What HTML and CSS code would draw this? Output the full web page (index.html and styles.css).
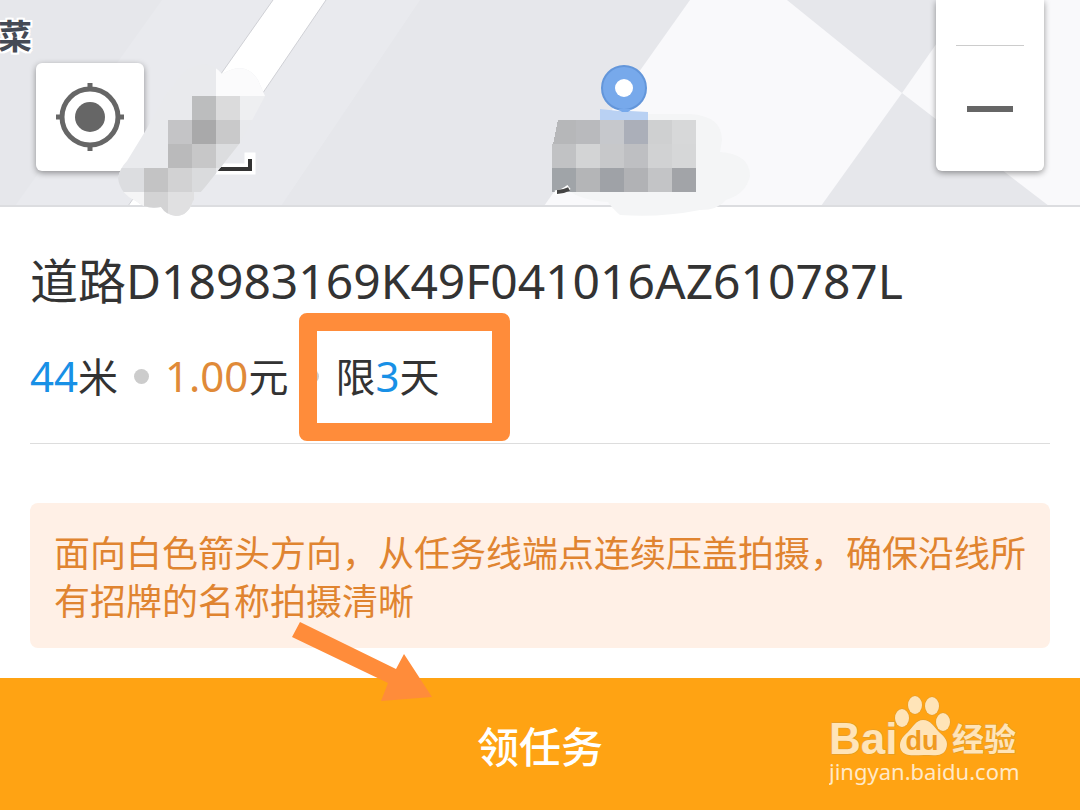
FILE: index.html
```html
<!DOCTYPE html>
<html lang="zh-CN">
<head>
    <meta charset="UTF-8">
    <meta name="viewport" content="width=device-width, initial-scale=1.0">
    <title>领任务</title>
    <link rel="stylesheet" href="styles.css">
</head>
<body>
    <section class="map">
        <svg class="map-base" viewBox="0 0 1080 206" preserveAspectRatio="xMidYMin slice" aria-hidden="true">
            <rect width="1080" height="206" fill="#e6e7eb"/>
            <path d="M162 0H420L281 206H15Z" fill="#e9eaee"/>
            <path d="M273 0H326L186 206H128Z" fill="#fff"/>
            <path d="M273 0L128 206M326 0L186 206" stroke="#cfd0d5" fill="none"/>
            <path d="M690 0H1080V206H544Z" fill="#f9f9fb"/>
            <path d="M787 0H967L902 93Z" fill="#e6e7eb"/>
            <path d="M902 93L821 206H1049Z" fill="#e6e7eb"/>
        </svg>
        <span class="map-label">菜</span>
        <button class="locate" type="button" aria-label="定位">
            <svg width="70" height="70" viewBox="0 0 70 70" fill="none" stroke="#666">
                <circle cx="35" cy="35" r="28" stroke-width="5"/>
                <circle cx="35" cy="35" r="15" fill="#666" stroke="none"/>
                <path d="M35 1V9M35 61V69M1 35H9M61 35H69" stroke-width="5"/>
            </svg>
        </button>
        <svg class="map-marks" viewBox="0 0 1080 206" preserveAspectRatio="xMidYMin slice" aria-hidden="true">
            <defs>
                <clipPath id="brush">
                    <path d="M182 74Q205 54 222 74Q246 60 258 80L265 96L240 143L206 186L193 201Q188 216 176 216Q166 215 161 207Q146 210 136 201Q120 194 118 178Q120 168 127 161L146 130L165 96Z"/>
                </clipPath>
            </defs>

            <!-- scale bar -->
            <path d="M212 169H250V158" fill="none" stroke="#fff" stroke-width="11" stroke-linecap="square"/>
            <path d="M212 169H250V159" fill="none" stroke="#333" stroke-width="4"/>

            <g clip-path="url(#brush)" shape-rendering="crispEdges">
                <rect x="112" y="48" width="160" height="170" fill="#e9eaed"/>
                <rect x="216" y="60" width="50" height="36" fill="#fbfbfc"/>
                <rect x="240" y="96" width="30" height="24" fill="#eeeff1"/>
                <rect x="192" y="96" width="24" height="24" fill="#bcbdbe"/>
                <rect x="216" y="96" width="24" height="24" fill="#dbdbdc"/>
                <rect x="168" y="120" width="24" height="24" fill="#c4c4c6"/>
                <rect x="192" y="120" width="24" height="24" fill="#a9a9aa"/>
                <rect x="216" y="120" width="24" height="24" fill="#c9c9ca"/>
                <rect x="168" y="144" width="24" height="24" fill="#bababb"/>
                <rect x="192" y="144" width="24" height="24" fill="#c7c7c8"/>
                <rect x="216" y="144" width="24" height="24" fill="#dcdddf"/>
                <rect x="112" y="168" width="32" height="24" fill="#dcdde0"/>
                <rect x="144" y="168" width="24" height="24" fill="#c3c3c4"/>
                <rect x="168" y="168" width="24" height="24" fill="#d2d2d3"/>
                <rect x="192" y="168" width="24" height="24" fill="#dadbdd"/>
                <rect x="112" y="192" width="32" height="24" fill="#f5f5f6"/>
                <rect x="144" y="192" width="24" height="24" fill="#d3d3d4"/>
                <rect x="168" y="192" width="26" height="26" fill="#e0e0e1"/>
            </g>

            <!-- place marker -->
            <path d="M648 114H690Q722 116 722 140L720 152Q750 154 750 176Q746 194 726 200Q718 210 700 210Q660 218 620 215Q612 208 608 202Q580 200 568 190L600 150Z" fill="#f4f5f6"/>
            <circle cx="624" cy="88" r="22" fill="#77a9eb" stroke="#6396da" stroke-width="2"/>
            <circle cx="624" cy="88" r="9" fill="#fff"/>
            <path d="M600 109L619 111H630L648 112V120H600Z" fill="#b9d1f3"/>
            <path d="M618 109L622 112H628L632 109Z" fill="#77a9eb"/>
            <g shape-rendering="crispEdges">
                <path d="M558 120H576V144H553L556 130Z" fill="#b6b7b9"/>
                <rect x="576" y="120" width="24" height="24" fill="#b9babd"/>
                <rect x="600" y="120" width="24" height="24" fill="#c6c8cc"/>
                <rect x="624" y="120" width="24" height="24" fill="#abafb9"/>
                <rect x="648" y="120" width="24" height="24" fill="#cfd0d1"/>
                <rect x="672" y="120" width="24" height="24" fill="#d7d8d9"/>
                <rect x="552" y="144" width="24" height="24" fill="#c1c2c4"/>
                <rect x="576" y="144" width="24" height="24" fill="#d3d4d5"/>
                <rect x="600" y="144" width="24" height="24" fill="#c7c8ca"/>
                <rect x="624" y="144" width="24" height="24" fill="#bebfc2"/>
                <rect x="648" y="144" width="24" height="24" fill="#d1d2d3"/>
                <rect x="672" y="144" width="24" height="24" fill="#d6d7d8"/>
                <rect x="552" y="168" width="24" height="24" fill="#a0a4a8"/>
                <rect x="576" y="168" width="24" height="24" fill="#b4b5b7"/>
                <rect x="600" y="168" width="24" height="24" fill="#9fa2a7"/>
                <rect x="624" y="168" width="24" height="24" fill="#b1b2b5"/>
                <rect x="648" y="168" width="24" height="24" fill="#c3c4c6"/>
                <rect x="672" y="168" width="24" height="24" fill="#a2a4a8"/>
            </g>
            <path d="M555 193Q563 192 569 187" fill="none" stroke="#fff" stroke-width="5"/>
            <path d="M557 192Q563 192 569 189" fill="none" stroke="#444" stroke-width="4"/>
        </svg>
        <div class="zoom">
            <button class="zoom-in" type="button" aria-label="放大"></button>
            <button class="zoom-out" type="button" aria-label="缩小">
                <svg width="46" height="6" viewBox="0 0 46 6"><rect width="46" height="6" fill="#666"/></svg>
            </button>
        </div>
    </section>

    <main class="task">
        <h1>道路D18983169K49F041016AZ610787L</h1>
        <div class="meta">
            <span><b class="blue">44</b>米</span>
            <i class="dot"></i>
            <span><b class="orange">1.00</b>元</span>
            <i class="dot"></i>
            <span class="limit">限<b class="blue">3</b>天</span>
        </div>
        <p class="notice">面向白色箭头方向，从任务线端点连续压盖拍摄，确保沿线所有招牌的名称拍摄清晰</p>
    </main>

    <footer class="bottom">
        <button class="accept" type="button">领任务</button>
        <svg class="arrow" width="140" height="82" viewBox="0 0 140 82" aria-hidden="true">
            <path d="M8 2L104 49L112 34L140 77L89 81L96 63L0 17Z" fill="#ff8c3a"/>
        </svg>
        <svg class="watermark" width="200" height="94" viewBox="0 0 200 94" role="img" aria-label="Baidu 经验">
            <g fill="#ffe4b8" stroke="#d99a35" stroke-width="1" paint-order="stroke">
                <text class="wm-bai" x="0" y="59">Bai</text>
                <ellipse cx="73" cy="23" rx="7" ry="9"/>
                <ellipse cx="86" cy="10" rx="7" ry="9"/>
                <ellipse cx="103" cy="11" rx="7" ry="9"/>
                <ellipse cx="114" cy="27" rx="7" ry="9"/>
                <path d="M94 25C102 25 105 32 110 37C116 42 120 47 117 54C114 62 105 60 95 60C84 60 76 62 72 55C69 48 73 42 79 37C84 32 87 25 94 25Z"/>
                <text class="wm-cn" x="123" y="56">经验</text>
            </g>
            <text class="wm-du" x="93" y="55" text-anchor="middle">du</text>
            <text class="wm-url" x="0" y="85">jingyan.baidu.com</text>
        </svg>
    </footer>
</body>
</html>
```
FILE: styles.css
```css
*, *::after {
    box-sizing: border-box;
}
body {
    margin: 0;
    min-height: 100vh;
    display: flex;
    flex-direction: column;
    background-color: #fff;
    color: #333;
    font-family: "Noto Sans", "Noto Sans CJK SC", sans-serif;
}
button {
    border: 0;
    padding: 0;
    background-color: #fff;
    cursor: pointer;
}

/* map */
.map {
    position: relative;
    height: 207px;
    border-bottom: 2px solid #dcdde0;
}
.map-base, .map-marks {
    position: absolute;
    top: 0;
    left: 0;
    width: 100%;
    height: 100%;
}
.map-marks {
    overflow: visible;
    pointer-events: none;
}
.map-label {
    position: absolute;
    top: 12px;
    left: -2px;
    font-size: 34px;
    line-height: 48px;
    font-weight: bold;
    color: #454a55;
    text-shadow: 2px 0 #fff, -2px 0 #fff, 0 2px #fff, 0 -2px #fff, 2px 2px #fff, -2px -2px #fff, 2px -2px #fff, -2px 2px #fff;
}
.locate {
    position: absolute;
    top: 63px;
    left: 36px;
    width: 108px;
    height: 108px;
    display: flex;
    align-items: center;
    justify-content: center;
    border-radius: 6px;
    box-shadow: 0 2px 6px rgba(0, 0, 0, 0.4);
}
.zoom {
    position: absolute;
    top: 0;
    right: 36px;
    width: 108px;
    padding: 0 20px;
    display: flex;
    flex-direction: column;
    background-color: #fff;
    border-radius: 0 0 6px 6px;
    box-shadow: 0 2px 6px rgba(0, 0, 0, 0.4);
}
.zoom-in {
    height: 46px;
    border-bottom: 1px solid #ccc;
}
.zoom-out {
    height: 125px;
    display: flex;
    align-items: center;
    justify-content: center;
}

/* task */
.task {
    flex: 1;
    padding: 42px 30px 30px;
}
h1 {
    margin: 0;
    font-size: 48px;
    line-height: 64px;
    font-weight: normal;
}
.meta {
    display: flex;
    align-items: center;
    gap: 16px;
    height: 131px;
    padding-bottom: 4px;
    border-bottom: 1px solid #ddd;
    font-size: 40px;
    line-height: 56px;
}
.meta b {
    font-size: 42px;
    font-weight: normal;
}
.blue {
    color: #1890e6;
}
.orange {
    color: #e08a38;
}
.dot {
    width: 15px;
    height: 15px;
    border-radius: 50%;
    background-color: #ccc;
}
.limit {
    position: relative;
}
.limit::after {
    content: "";
    position: absolute;
    top: -35px;
    left: -36px;
    width: 211px;
    height: 128px;
    border: 18px solid #ff8c3a;
    border-radius: 8px;
}
.notice {
    margin: 59px 0 0;
    padding: 27px 24px 22px;
    border-radius: 8px;
    background-color: #fff0e6;
    color: #e08430;
    font-size: 36px;
    line-height: 48px;
}

/* bottom bar */
.bottom {
    position: relative;
}
.accept {
    display: block;
    width: 100%;
    height: 132px;
    background-color: #ffa313;
    color: #fff;
    font-family: inherit;
    font-size: 42px;
    font-weight: 500;
}
.arrow {
    position: absolute;
    top: -58px;
    left: 292px;
}
.watermark {
    position: absolute;
    top: 17px;
    right: 51px;
    pointer-events: none;
}
.wm-bai {
    font: bold 44px "Liberation Sans", sans-serif;
}
.wm-cn {
    font: bold 32px "Noto Sans CJK SC", sans-serif;
}
.wm-du {
    font: bold 27px "Liberation Sans", sans-serif;
    fill: #f09a20;
}
.wm-url {
    font: 22px "Noto Sans", sans-serif;
    fill: #ffe9c8;
}
```
